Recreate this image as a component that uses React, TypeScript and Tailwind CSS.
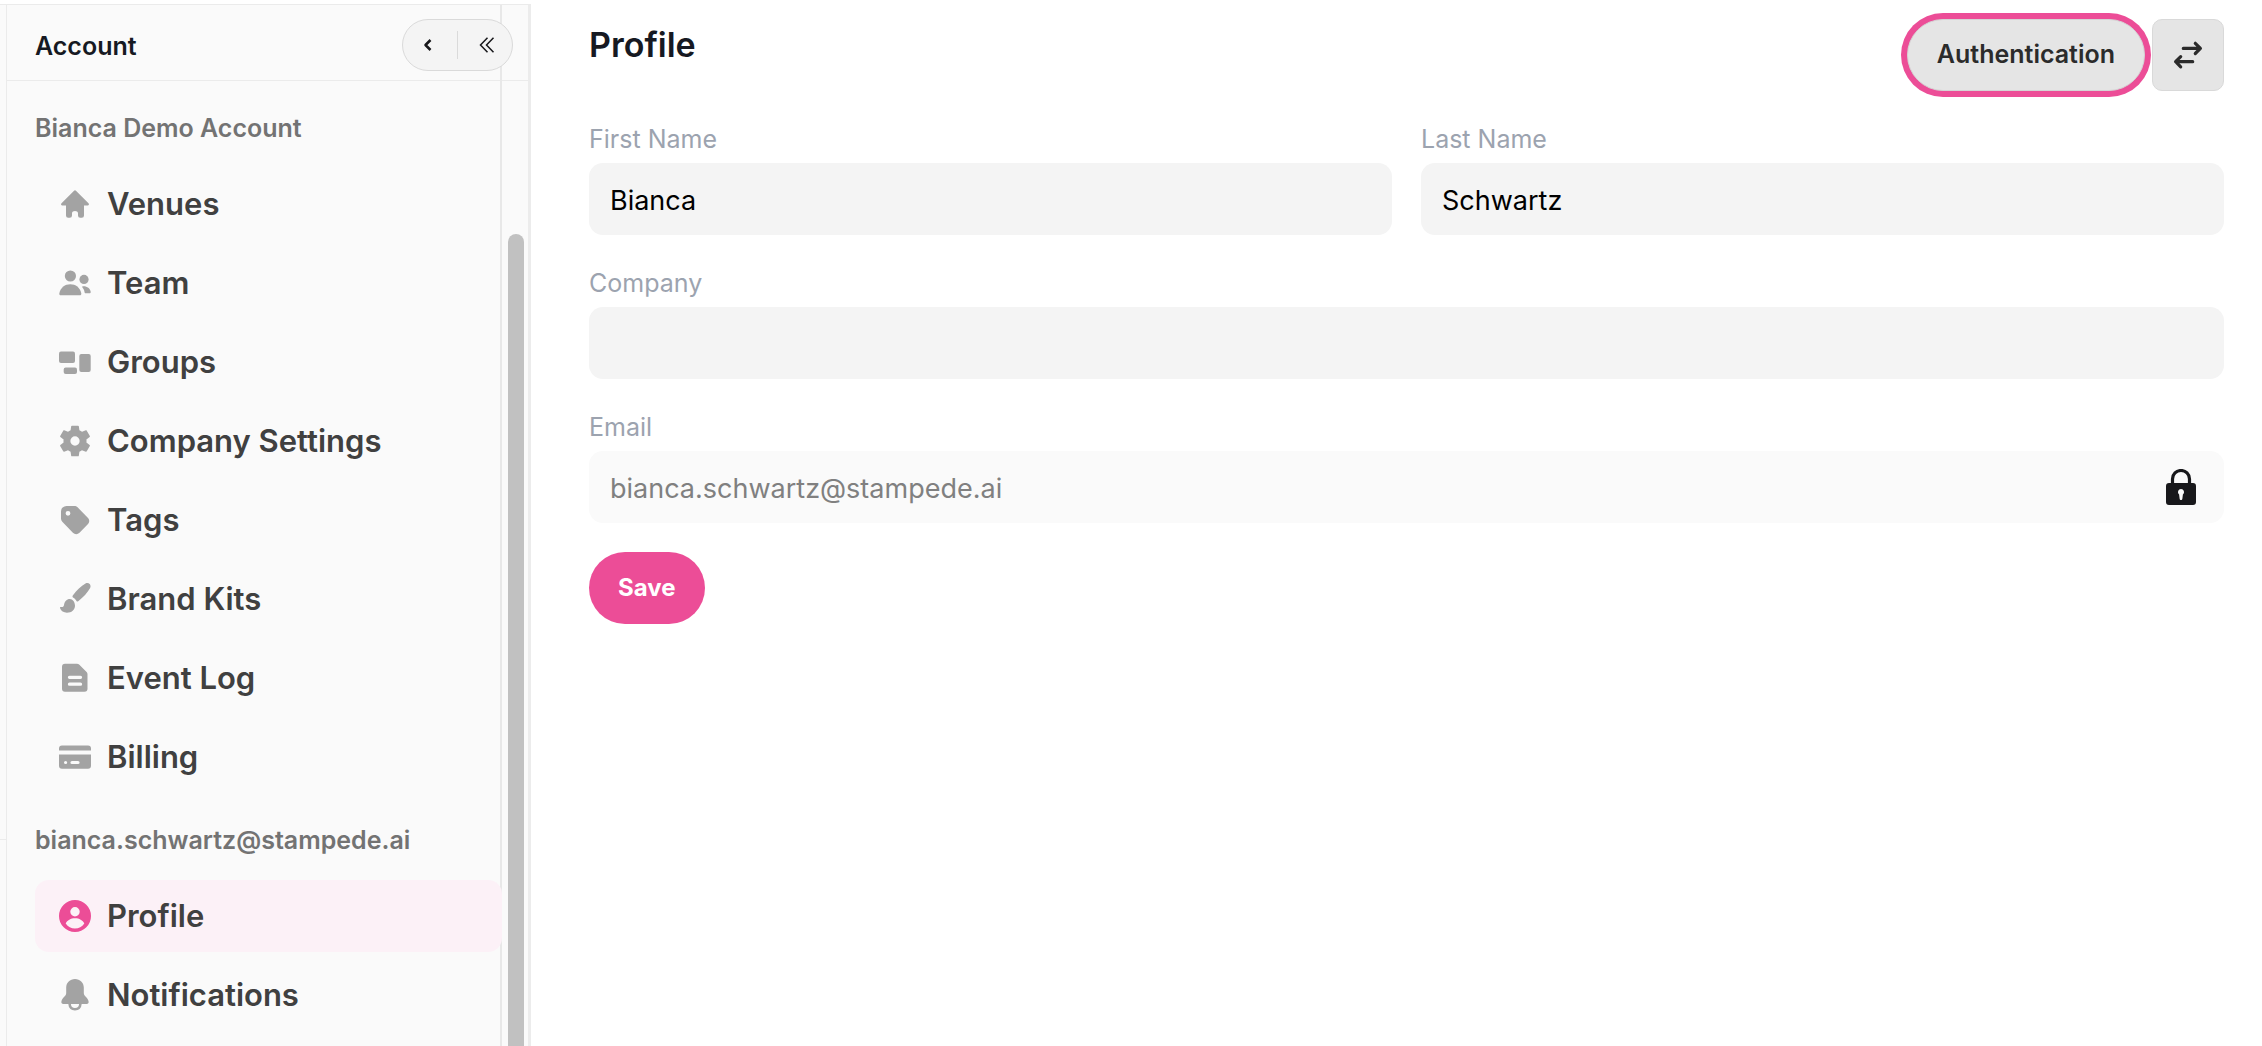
import { useState } from "react";
import type { ReactNode } from "react";

type NavItem = {
  label: string;
  icon: ReactNode;
};

function Icon({ children }: { children: ReactNode }) {
  return (
    <svg viewBox="0 0 32 32" className="size-8 shrink-0" fill="currentColor" aria-hidden="true">
      {children}
    </svg>
  );
}

const accountItems: NavItem[] = [
  {
    label: "Venues",
    icon: (
      <Icon>
        <path d="M14.8 2.9a1.7 1.7 0 0 1 2.4 0l12.3 12.4c.9.9.4 2.2-.9 2.2H25v10a2.2 2.2 0 0 1-2.2 2.2h-1.6a2.2 2.2 0 0 1-2.2-2.2v-2.2c0-3.2-6-3.2-6 0v2.2a2.2 2.2 0 0 1-2.2 2.2H9.2A2.2 2.2 0 0 1 7 27.5v-10H3.4c-1.3 0-1.8-1.3-.9-2.2Z" />
      </Icon>
    ),
  },
  {
    label: "Team",
    icon: (
      <Icon>
        <circle cx="11.4" cy="9" r="5.6" />
        <circle cx="25" cy="12.4" r="4.6" />
        <path d="M.3 26.5C1.5 20.5 6 17.3 11.3 17.3S21.1 20.5 22.3 26.5c.1 1-.4 1.8-1.5 1.8h-19C.7 28.3.2 27.5.3 26.5Z" />
        <path d="M23.7 19.2c4.2-.4 7.3 2 8 5.5.1 1-.4 1.6-1.3 1.6h-3.5c-1 0-1.3-.5-1.4-1.4-.2-1.5-.8-2.8-1.9-4.2-.5-.7-.5-1.4.1-1.5Z" />
      </Icon>
    ),
  },
  {
    label: "Groups",
    icon: (
      <Icon>
        <rect x="0" y="5.6" width="16" height="11.4" rx="2" />
        <rect x="4.7" y="21.6" width="13.3" height="6.4" rx="2" />
        <rect x="20.3" y="8" width="11.4" height="18" rx="2" />
      </Icon>
    ),
  },
  {
    label: "Company Settings",
    icon: (
      <svg viewBox="2 2 20 20" className="size-8 shrink-0" fill="currentColor" fillRule="evenodd" aria-hidden="true">
        <path d="M19.14 12.94c.04-.3.06-.61.06-.94 0-.32-.02-.64-.07-.94l2.03-1.58c.18-.14.23-.41.12-.61l-1.92-3.32c-.12-.22-.37-.29-.59-.22l-2.39.96c-.5-.38-1.03-.7-1.62-.94L14.4 2.81c-.04-.24-.24-.41-.48-.41h-3.84c-.24 0-.43.17-.47.41L9.25 5.35c-.59.24-1.13.57-1.62.94l-2.39-.96c-.22-.08-.47 0-.59.22L2.74 8.87c-.12.21-.08.47.12.61l2.03 1.58c-.05.3-.09.63-.09.94s.02.64.07.94l-2.03 1.58c-.18.14-.23.41-.12.61l1.92 3.32c.12.22.37.29.59.22l2.39-.96c.5.38 1.03.7 1.62.94l.36 2.54c.05.24.24.41.48.41h3.84c.24 0 .44-.17.47-.41l.36-2.54c.59-.24 1.13-.56 1.62-.94l2.39.96c.22.08.47 0 .59-.22l1.92-3.32c.12-.22.07-.47-.12-.61ZM12 14.9a2.9 2.9 0 1 1 0-5.8 2.9 2.9 0 0 1 0 5.8Z" />
      </svg>
    ),
  },
  {
    label: "Tags",
    icon: (
      <Icon>
        <path
          fillRule="evenodd"
          d="M2 7.5A5.5 5.5 0 0 1 7.5 2h7.9c1.2 0 2.3.5 3.2 1.3l10.2 10.5c1.9 1.9 1.9 4.5 0 6.4l-8.3 8.5c-1.9 1.9-4.7 1.9-6.6 0L3.3 17.7A4.5 4.5 0 0 1 2 14.5Zm7 4.2a2.4 2.4 0 1 0 0-4.8 2.4 2.4 0 0 0 0 4.8Z"
        />
      </Icon>
    ),
  },
  {
    label: "Brand Kits",
    icon: (
      <Icon>
        <path d="M13.8 12.5C17.6 7.4 22 2.9 26.5.5c1.6-.7 3.2-.5 4.2.6s1.1 2.7.3 4.2c-2.5 4.5-6.8 9-11.5 12.7-1.2.9-1.9.6-2.3-.4-.6-1.2-1.6-2.2-2.8-2.8-.9-.5-1.2-1.3-.6-2.3Z" />
        <path d="M16 22.7c0 4.2-3.5 7-8 7-3.4 0-6.1-1.7-7-4.6-.2-.9.4-1.3 1.1-1.2 1.7.3 2.6-.3 2.9-2 .6-3.6 2.7-6 5.8-6 3 0 5.2 3 5.2 6.8Z" />
      </Icon>
    ),
  },
  {
    label: "Event Log",
    icon: (
      <Icon>
        <path
          fillRule="evenodd"
          d="M3 4.7a3 3 0 0 1 3-3h11.9c.9 0 1.6.3 2.2.9l7.5 7.5c.6.6.9 1.3.9 2.1v14.5a3 3 0 0 1-3 3H6a3 3 0 0 1-3-3Zm7.5 9a1.5 1.5 0 0 0 0 3.3h11a1.5 1.5 0 0 0 0-3.3Zm0 6.8a1.5 1.5 0 0 0 0 3.3h11a1.5 1.5 0 0 0 0-3.3Z"
        />
      </Icon>
    ),
  },
  {
    label: "Billing",
    icon: (
      <Icon>
        <path d="M0 9.5V7.6a3 3 0 0 1 3-3h26a3 3 0 0 1 3 3v1.9Z" />
        <path
          fillRule="evenodd"
          d="M0 13.5h32v11.2a3 3 0 0 1-3 3H3a3 3 0 0 1-3-3Zm6.6 6.4a1.6 1.6 0 1 0 0 3.2 1.6 1.6 0 0 0 0-3.2Zm6.4 0a1.6 1.6 0 0 0 0 3.2h6a1.6 1.6 0 0 0 0-3.2Z"
        />
      </Icon>
    ),
  },
];

const userItems: NavItem[] = [
  {
    label: "Profile",
    icon: (
      <Icon>
        <path
          fillRule="evenodd"
          d="M16 0a16 16 0 1 1 0 32 16 16 0 0 1 0-32Zm0 7a4.7 4.7 0 1 0 0 9.400A4.700 4.700 0 0 0 16 7Zm0 11.3c-4.300 0-7.800 2-9.300 5.200 2.300 3.300 5.500 5 9.300 5s7-1.700 9.300-5c-1.500-3.200-5-5.200-9.300-5.200Z"
        />
      </Icon>
    ),
  },
  {
    label: "Notifications",
    icon: (
      <Icon>
        <path d="M16 0c5 0 8.800 3.600 8.800 8.500v5.200c0 1.400.5 2.500 1.500 3.500 1.700 1.700 2.900 3.300 3.300 5.200.3 1.500-.5 2.500-1.900 2.500H4.300c-1.400 0-2.200-1-1.900-2.500.4-1.900 1.600-3.500 3.300-5.200 1-1 1.500-2.100 1.500-3.500V8.500C7.200 3.600 11 0 16 0Z" />
        <path d="M10.500 24.500c.3 3.500 2.500 5.800 5.500 5.800s5.200-2.300 5.500-5.800" fill="none" stroke="currentColor" strokeWidth="2.6" />
      </Icon>
    ),
  },
];

function NavList({
  items,
  active,
  onSelect,
}: {
  items: NavItem[];
  active: string;
  onSelect: (label: string) => void;
}) {
  return (
    <ul className="flex flex-col gap-[7px]">
      {items.map((item) => {
        const isActive = item.label === active;
        return (
          <li key={item.label}>
            <a
              href="#"
              onClick={(e) => {
                e.preventDefault();
                onSelect(item.label);
              }}
              className={`-mr-0.5 flex h-[72px] items-center gap-4 rounded-[14px] pl-6 text-[31px] font-semibold text-[#404040] ${
                isActive ? "bg-[#fcf1f7]" : ""
              }`}
            >
              <span className={isActive ? "text-[#ec4d97]" : "text-[#a3a3a3]"}>{item.icon}</span>
              {item.label}
            </a>
          </li>
        );
      })}
    </ul>
  );
}

function Field({
  id,
  label,
  value,
  onChange,
}: {
  id: string;
  label: string;
  value: string;
  onChange: (value: string) => void;
}) {
  return (
    <div className="flex flex-1 flex-col gap-[5px]">
      <label htmlFor={id} className="text-[25px] leading-[38px] text-[#9ca3af]">
        {label}
      </label>
      <input
        id={id}
        value={value}
        onChange={(e) => onChange(e.target.value)}
        className="h-[72px] w-full rounded-[14px] bg-[#f4f4f4] px-[21px] pt-0.5 text-[27px] text-black outline-none"
      />
    </div>
  );
}

export default function App() {
  const [active, setActive] = useState("Profile");
  const [firstName, setFirstName] = useState("Bianca");
  const [lastName, setLastName] = useState("Schwartz");
  const [company, setCompany] = useState("");

  return (
    <div className="flex h-screen overflow-hidden bg-white pt-1 font-['Inter',sans-serif]">
      <div className="flex shrink-0 border-t border-[#ebebeb] bg-[#fafafa]">
        <div className="flex w-[7px] flex-col border-r border-[#ebebeb]">
          <div className="h-[835px] border-b border-[#ebebeb]" />
        </div>

        <aside className="flex w-[495px] flex-col border-r-2 border-[#e8e8e8]">
          <header className="relative flex h-[76px] shrink-0 items-center border-b border-[#ebebeb] pt-2 pl-7">
            <h2 className="text-[25px] font-semibold text-[#161922]">Account</h2>
            <div className="absolute top-3.5 -right-[13px] z-10 flex h-[52px] w-[111px] items-center rounded-full border border-[#dadada] bg-[#f4f4f4] text-[#18181b]">
              <button type="button" aria-label="Back" className="flex h-full flex-1 items-center justify-center pr-1">
                <svg viewBox="0 0 16 16" className="size-4" fill="none" stroke="currentColor" strokeWidth="2.5" strokeLinejoin="round">
                  <path d="M10.5 3 5.500 8l5 5" />
                </svg>
              </button>
              <span className="h-7 w-px bg-[#dadada]" />
              <button type="button" aria-label="Collapse sidebar" className="flex h-full flex-1 items-center justify-center pl-1">
                <svg viewBox="0 0 16 16" className="size-4" fill="none" stroke="currentColor" strokeWidth="1.5">
                  <path d="M8.500.8 1.500 8l7 7.200M14.500.8l-7 7.200 7 7.200" />
                </svg>
              </button>
            </div>
          </header>

          <nav className="flex flex-col pl-7">
            <h3 className="pt-[27px] pb-5 text-[25px] leading-10 font-semibold text-[#737373]">Bianca Demo Account</h3>
            <NavList items={accountItems} active={active} onSelect={setActive} />
            <h3 className="pt-[27px] pb-5 text-[25px] leading-10 font-semibold text-[#737373]">bianca.schwartz@stampede.ai</h3>
            <NavList items={userItems} active={active} onSelect={setActive} />
          </nav>
        </aside>

        <div className="flex w-[29px] flex-col border-r-3 border-[#ececec]">
          <div className="h-[76px] shrink-0 border-b border-[#ebebeb]" />
          <div className="mt-[153px] ml-1.5 w-4 flex-1 rounded-t-full bg-[#c1c1c1]" />
        </div>
      </div>

      <main className="flex min-w-0 flex-1 flex-col gap-[29px] pt-[15px] pr-[38px] pl-[58px]">
        <header className="flex h-[72px] items-start justify-between">
          <h1 className="text-[34px] leading-[52px] font-semibold text-[#161922]">Profile</h1>
          <div className="flex gap-[7px]">
            <button
              type="button"
              className="h-[72px] rounded-full border border-[#d4d4d4] bg-[#e5e5e5] px-[29px] text-[25px] font-semibold text-[#2b2b2b] ring-6 ring-[#ec4d97]"
            >
              Authentication
            </button>
            <button
              type="button"
              aria-label="Switch account"
              className="flex size-[72px] items-center justify-center rounded-[10px] border border-[#d9d9d9] bg-[#e5e5e5] text-[#2b2b2b]"
            >
              <svg
                viewBox="0 0 32 32"
                className="size-8"
                fill="none"
                stroke="currentColor"
                strokeWidth="3.2"
                strokeLinecap="round"
                strokeLinejoin="round"
              >
                <path d="M11.3 9.400h17M23.300 4.300l5.100 5.100-5.100 5.100M20.700 22.700h-17M8.700 17.600l-5.100 5.100 5.100 5.100" />
              </svg>
            </button>
          </div>
        </header>

        <form className="flex flex-col gap-[29px]" onSubmit={(e) => e.preventDefault()}>
          <div className="flex gap-[29px]">
            <Field id="first-name" label="First Name" value={firstName} onChange={setFirstName} />
            <Field id="last-name" label="Last Name" value={lastName} onChange={setLastName} />
          </div>
          <Field id="company" label="Company" value={company} onChange={setCompany} />

          <div className="flex flex-col gap-[5px]">
            <label htmlFor="email" className="text-[25px] leading-[38px] text-[#9ca3af]">
              Email
            </label>
            <div className="flex h-[72px] items-center rounded-[14px] bg-[#fafafa] pr-7">
              <input
                id="email"
                type="email"
                value="bianca.schwartz@stampede.ai"
                disabled
                className="h-full min-w-0 flex-1 bg-transparent px-[21px] pt-0.5 text-[27px] text-[#808080]"
              />
              <svg viewBox="0 0 30 36" className="h-9 w-[30px] shrink-0 text-[#18181b]" fill="currentColor" aria-hidden="true">
                <path d="M6.500 16V10a8.500 8.500 0 0 1 17 0v6" fill="none" stroke="currentColor" strokeWidth="3.2" />
                <path
                  fillRule="evenodd"
                  d="M0 17a3 3 0 0 1 3-3h24a3 3 0 0 1 3 3v16a3 3 0 0 1-3 3H3a3 3 0 0 1-3-3Zm15 3a3.100 3.100 0 0 0-1.900 5.500l.5 4c.2 2 2.600 2 2.800 0l.5-4A3.100 3.100 0 0 0 15 20Z"
                />
              </svg>
            </div>
          </div>

          <button
            type="submit"
            className="h-[72px] self-start rounded-full bg-[#ec4d97] px-[29px] text-2xl font-bold text-white"
          >
            Save
          </button>
        </form>
      </main>
    </div>
  );
}
